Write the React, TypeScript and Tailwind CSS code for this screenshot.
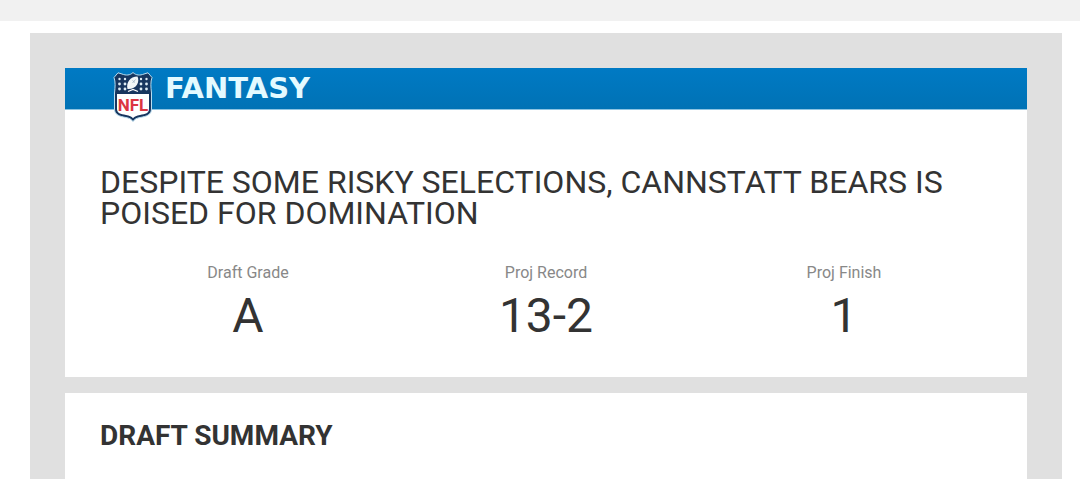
const stats = [
  { label: 'Draft Grade', value: 'A' },
  { label: 'Proj Record', value: '13-2' },
  { label: 'Proj Finish', value: '1' },
];

function Shield() {
  return (
    <svg viewBox="0 0 40 50" className="h-[50px] w-10 shrink-0" role="img" aria-label="NFL">
      <path
        d="M20 .5C17 3.500 13 3.600 9 2L5 .8 1 5.500C2.600 10 2.200 15 1.500 21V37C1.500 43 7 44.500 13 45.500 17 46.200 18.500 47.500 20 49.500 21.500 47.500 23 46.200 27 45.500 33 44.500 38.500 43 38.500 37V21C37.800 15 37.400 10 39 5.500L35 .8 31 2C27 3.600 23 3.500 20 .5Z"
        fill="#17365f"
        stroke="#b9ddf0"
        strokeWidth="1"
      />
      <path
        d="M4 22H36V37C36 41 32.500 42 27 43 23.500 43.700 21.500 44.600 20 46.200 18.500 44.600 16.500 43.700 13 43 7.500 42 4 41 4 37Z"
        fill="#fff"
      />
      <g fill="#dcebf4">
        {[6.5, 12, 28, 33.5].map((x) => (
          <g key={x}>
            <circle cx={x} cy="7" r="1.200" />
            <circle cx={x} cy="12" r="1.400" />
            <circle cx={x} cy="17" r="1.400" />
          </g>
        ))}
      </g>
      <path d="M14.500 17C12.800 11 17 4.500 24.500 4.500 27 10 23.500 17.500 14.500 17Z" fill="#f1f6f8" />
      <path d="M19.500 11 22.500 7.500M19.500 8.500 22 10.500" stroke="#9db2c4" strokeWidth=".8" />
      <path d="M15 19.500 20 17.500 25 19.500" stroke="#fff" strokeWidth="1.200" fill="none" />
      <text
        x="20"
        y="38.500"
        textAnchor="middle"
        className="font-['Roboto',sans-serif] text-[17px] font-bold"
        fill="#dc3542"
      >
        NFL
      </text>
    </svg>
  );
}

export default function App() {
  return (
    <div className="min-h-screen overflow-hidden bg-white font-['Roboto',sans-serif] text-[#333]">
      <div className="h-[21px] bg-[#f1f1f1]" />
      <main className="mt-3 mr-[18px] ml-[30px] flex flex-col gap-4 bg-[#e0e0e0] px-[35px] pt-[35px]">
        <section className="bg-white pb-[37px]">
          <header className="flex h-[42px] items-start border-b border-[#8dc4e2] bg-linear-to-b from-[#007ac4] to-[#0072b5] pt-1 pl-12">
            <Shield />
            <span className="ml-3 font-['DejaVu_Sans',sans-serif] text-[29px] leading-8 font-bold text-[#e4faff]">
              FANTASY
            </span>
          </header>
          <h1 className="px-[35px] pt-[57px] text-[32px] leading-[31px] uppercase">
            Despite some risky selections, Cannstatt Bears is poised for domination
          </h1>
          <dl className="mt-8 grid grid-cols-3 px-[34px] text-center">
            {stats.map((stat) => (
              <div key={stat.label}>
                <dt className="text-base leading-6 text-[#888]">{stat.label}</dt>
                <dd className="mt-[7px] text-5xl leading-12">{stat.value}</dd>
              </div>
            ))}
          </dl>
        </section>
        <section className="bg-white px-[35px] pt-[27px] pb-10">
          <h2 className="text-[28px] leading-8 font-bold uppercase">Draft Summary</h2>
        </section>
      </main>
    </div>
  );
}
